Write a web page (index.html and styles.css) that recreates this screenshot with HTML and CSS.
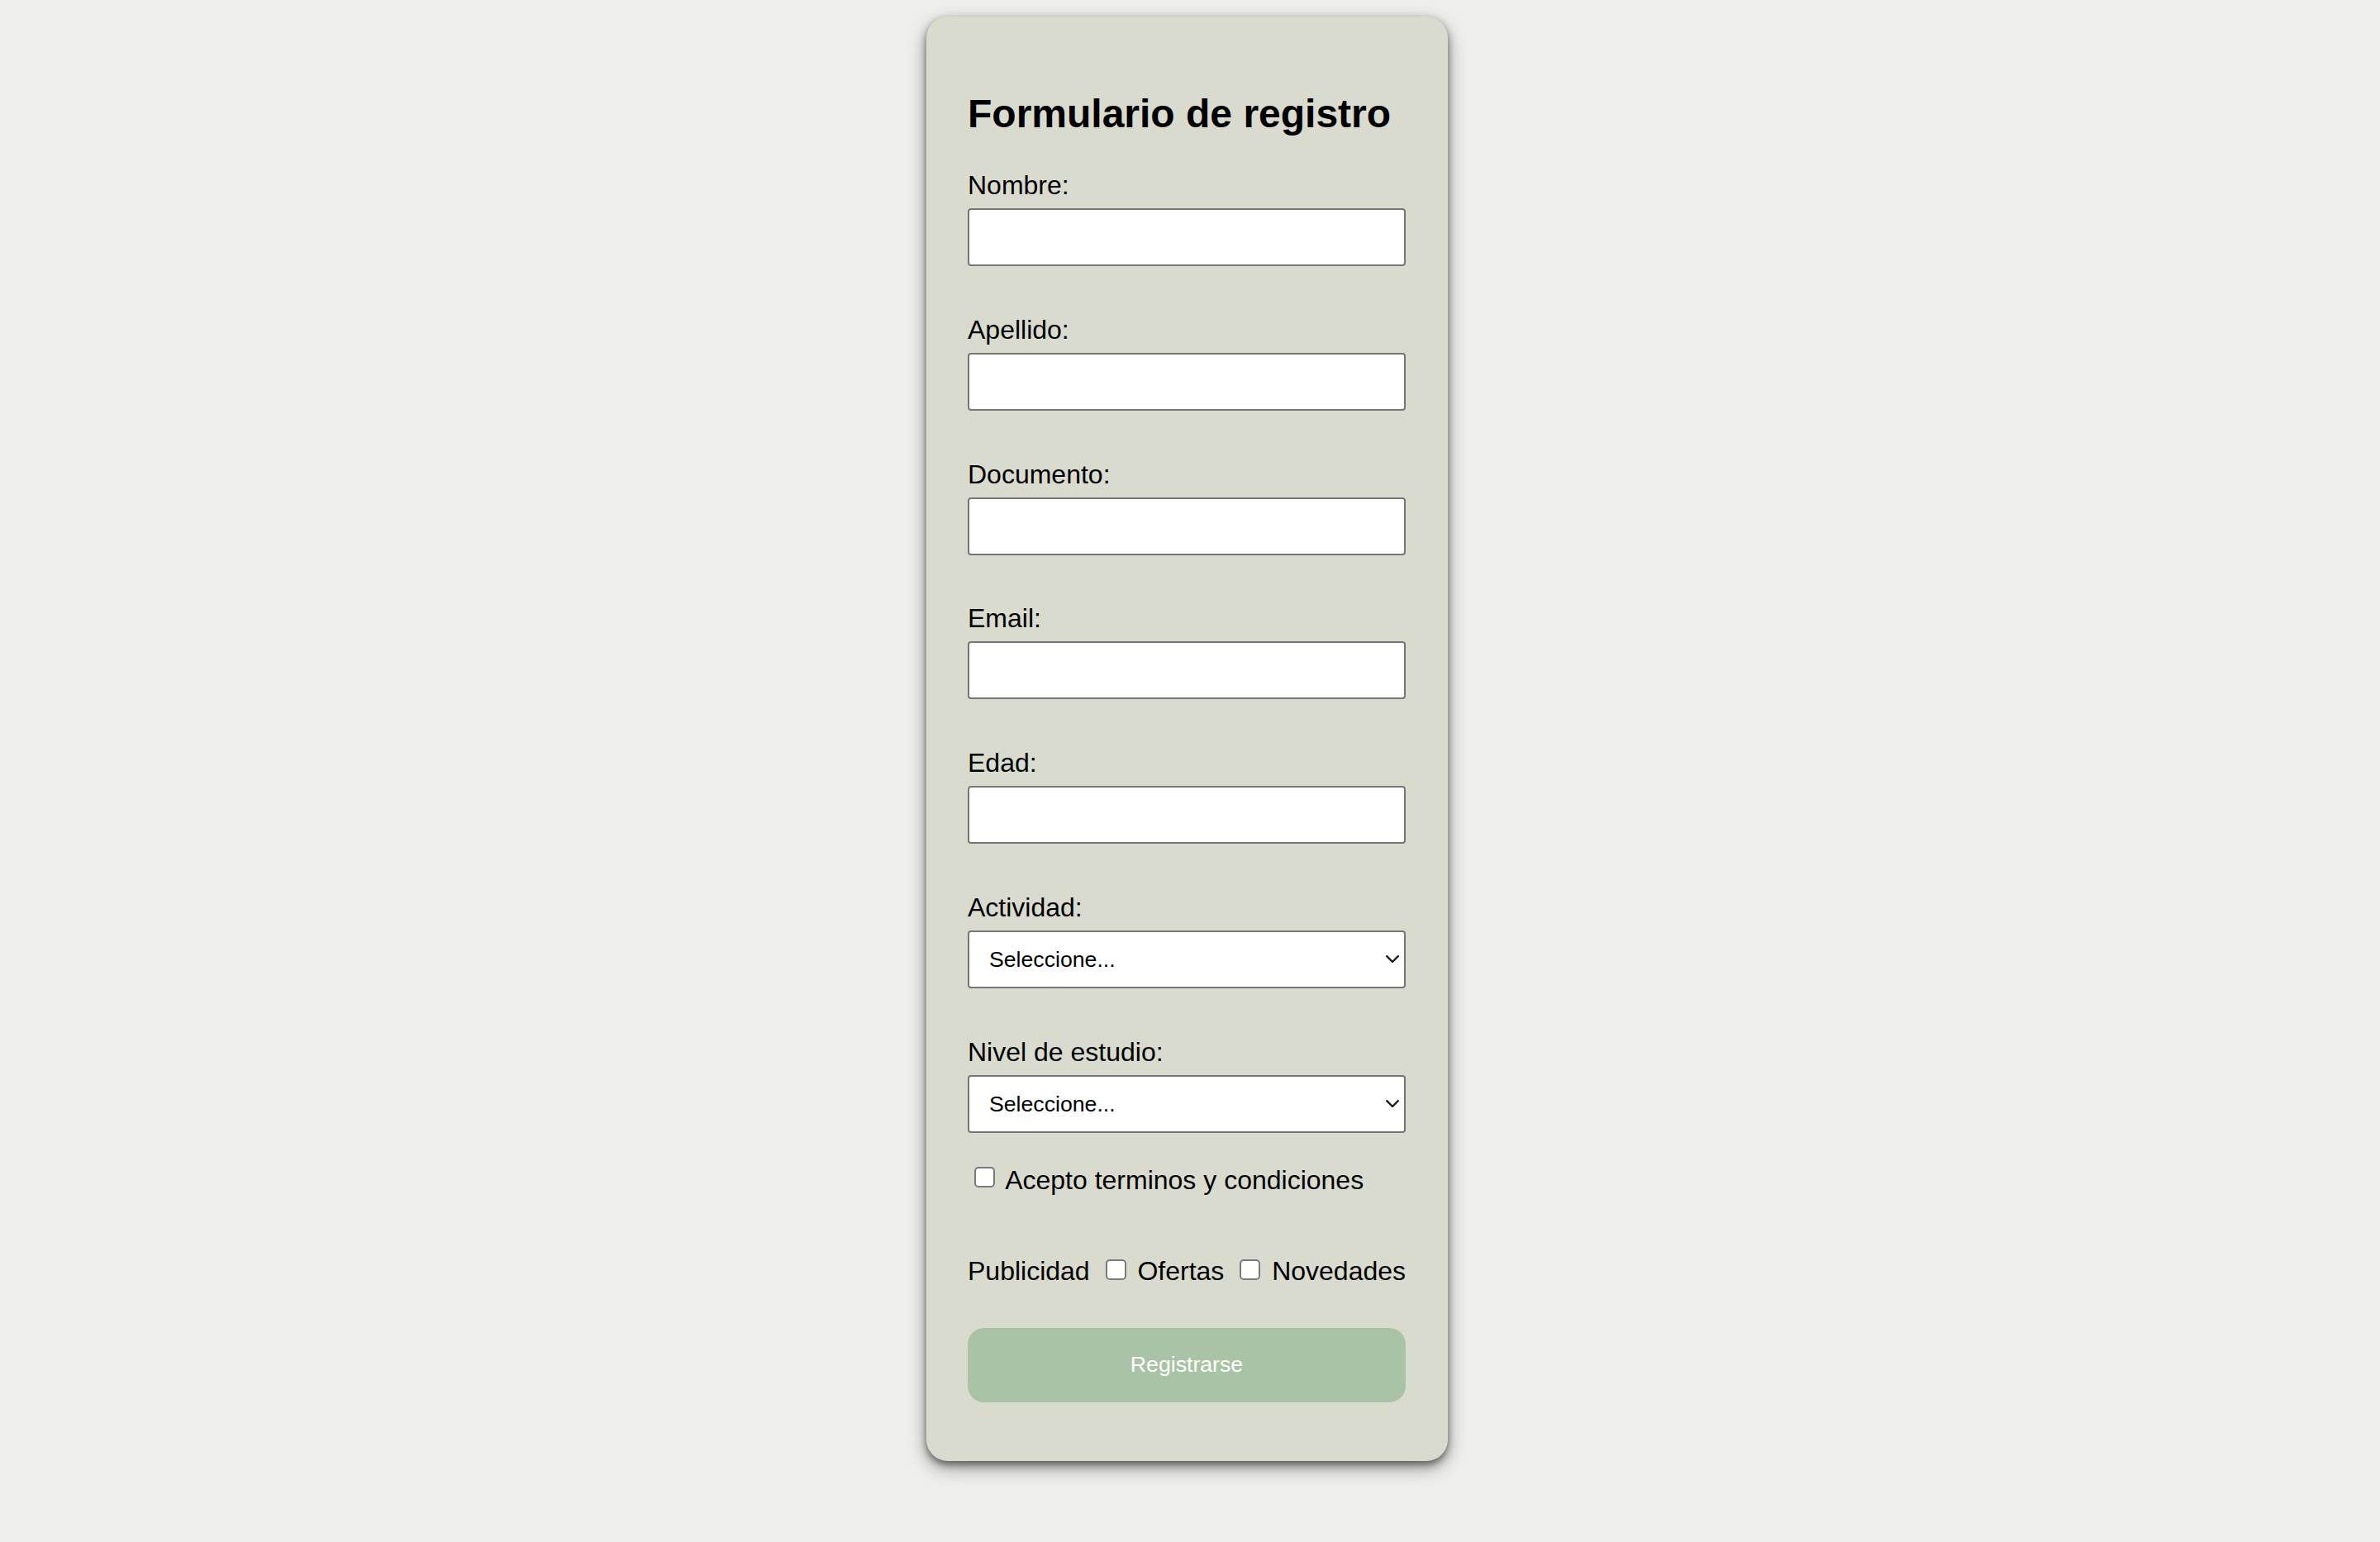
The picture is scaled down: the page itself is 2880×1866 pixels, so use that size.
FILE: index.html
```html
<!DOCTYPE html>
<html lang="es">
<head>
<meta charset="utf-8">
<title>Formulario de registro</title>
<link rel="stylesheet" href="styles.css">
</head>
<body>
<main class="page">
  <form class="card">
    <h2 class="title">Formulario de registro</h2>

    <div class="field">
      <label class="label" for="nombre">Nombre:</label>
      <input class="input" id="nombre" type="text">
    </div>
    <div class="field">
      <label class="label" for="apellido">Apellido:</label>
      <input class="input" id="apellido" type="text">
    </div>
    <div class="field">
      <label class="label" for="documento">Documento:</label>
      <input class="input" id="documento" type="text">
    </div>
    <div class="field">
      <label class="label" for="email">Email:</label>
      <input class="input" id="email" type="email">
    </div>
    <div class="field">
      <label class="label" for="edad">Edad:</label>
      <input class="input" id="edad" type="number">
    </div>
    <div class="field">
      <label class="label" for="actividad">Actividad:</label>
      <div class="select-wrap">
        <select class="select" id="actividad">
          <option>Seleccione...</option>
        </select>
        <svg class="chev" width="16" height="10" viewBox="0 0 16 10" aria-hidden="true"><polyline points="1.2,1.2 8,8 14.8,1.2" fill="none" stroke="#1c1c1c" stroke-width="2.4" stroke-linecap="round" stroke-linejoin="round"/></svg>
      </div>
    </div>
    <div class="field field-last">
      <label class="label" for="nivel">Nivel de estudio:</label>
      <div class="select-wrap">
        <select class="select" id="nivel">
          <option>Seleccione...</option>
        </select>
        <svg class="chev" width="16" height="10" viewBox="0 0 16 10" aria-hidden="true"><polyline points="1.2,1.2 8,8 14.8,1.2" fill="none" stroke="#1c1c1c" stroke-width="2.4" stroke-linecap="round" stroke-linejoin="round"/></svg>
      </div>
    </div>

    <label class="check-row terms"><input class="check check-terms" type="checkbox"> Acepto terminos y condiciones</label>

    <div class="check-row pub">Publicidad <input class="check" type="checkbox"> Ofertas <input class="check" type="checkbox"> Novedades</div>

    <button class="btn" type="button">Registrarse</button>
  </form>
</main>
</body>
</html>
```

FILE: styles.css
```css
html, body {
  margin: 0;
  padding: 0;
}

body {
  background: #efefed;
  font-family: "Liberation Sans", Arial, sans-serif;
  color: #000;
}

.page {
  display: flex;
  justify-content: center;
  padding: 20px 7px 97px 0;
}

.card {
  width: 631px;
  box-sizing: border-box;
  padding: 90px 51px 71px 50px;
  background: #dadbcf;
  border-radius: 26px;
  box-shadow: 0 4px 8px rgba(0, 0, 0, 0.45), 0 8px 22px rgba(0, 0, 0, 0.38);
  display: flex;
  flex-direction: column;
}

.title {
  margin: 0 0 39px;
  font-size: 48px;
  line-height: 55px;
  font-weight: 700;
}

.field {
  display: flex;
  flex-direction: column;
  margin-bottom: 56.8px;
}

.field-last {
  margin-bottom: 37px;
}

.label {
  font-size: 32px;
  line-height: 37px;
  padding-top: 2px;
  margin-bottom: 9px;
}

.input {
  display: block;
  width: 100%;
  height: 70px;
  box-sizing: border-box;
  margin: 0;
  padding: 0 12px;
  border: 2px solid #767676;
  border-radius: 4px;
  background: #fff;
  font-family: "Liberation Sans", Arial, sans-serif;
  font-size: 26.67px;
  outline: none;
}

.select-wrap {
  position: relative;
}

.select {
  display: block;
  width: 100%;
  height: 70px;
  box-sizing: border-box;
  margin: 0;
  padding: 0 40px 0 24px;
  border: 2px solid #767676;
  border-radius: 4px;
  background: #fff;
  color: #000;
  font-family: "Liberation Sans", Arial, sans-serif;
  font-size: 26.67px;
  -webkit-appearance: none;
  appearance: none;
  outline: none;
}

.chev {
  position: absolute;
  right: 8px;
  top: 30px;
  pointer-events: none;
}

.check-row {
  display: block;
  font-size: 32px;
  line-height: 37px;
  height: 35px;
  padding-top: 2px;
  white-space: nowrap;
}

.terms {
  margin-bottom: 73px;
}

.pub {
  margin-bottom: 52px;
}

.check {
  -webkit-appearance: none;
  appearance: none;
  display: inline-block;
  width: 25px;
  height: 25px;
  box-sizing: border-box;
  margin: 0 5px 0 10px;
  border: 2px solid #7a7a7a;
  border-radius: 5px;
  background: #fff;
  vertical-align: baseline;
}

.check-terms {
  margin-left: 8px;
  vertical-align: 2px;
}

.btn {
  display: block;
  width: 100%;
  height: 90px;
  margin: 0;
  padding: 0;
  border: none;
  border-radius: 20px;
  background: #a9c3a6;
  color: #fff;
  font-family: "Liberation Sans", Arial, sans-serif;
  font-size: 26.67px;
}
```
